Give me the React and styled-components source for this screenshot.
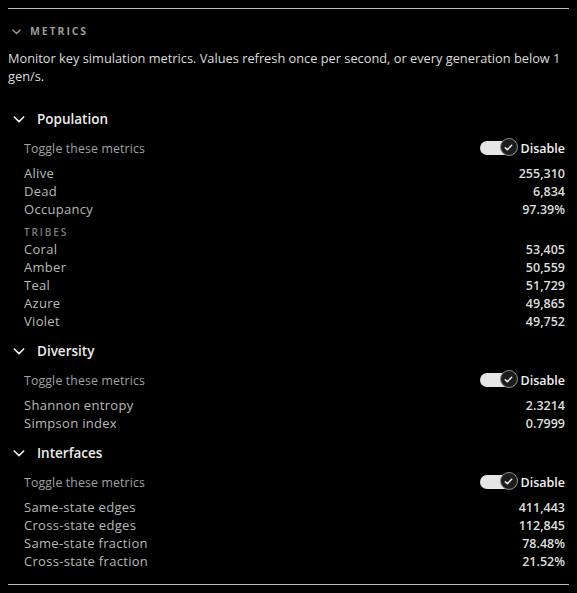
import React from "react";
import styled, { createGlobalStyle } from "styled-components";

const GlobalStyle = createGlobalStyle`
  body {
    margin: 8px;
    background: #000;
    font-family: "Open Sans", "Noto Sans", sans-serif;
  }
`;

const sections = [
  {
    title: "Population",
    rows: [
      { label: "Alive", value: "255,310" },
      { label: "Dead", value: "6,834" },
      { label: "Occupancy", value: "97.39%" },
    ],
    groups: [
      {
        title: "Tribes",
        rows: [
          { label: "Coral", value: "53,405" },
          { label: "Amber", value: "50,559" },
          { label: "Teal", value: "51,729" },
          { label: "Azure", value: "49,865" },
          { label: "Violet", value: "49,752" },
        ],
      },
    ],
  },
  {
    title: "Diversity",
    rows: [
      { label: "Shannon entropy", value: "2.3214" },
      { label: "Simpson index", value: "0.7999" },
    ],
  },
  {
    title: "Interfaces",
    rows: [
      { label: "Same-state edges", value: "411,443" },
      { label: "Cross-state edges", value: "112,845" },
      { label: "Same-state fraction", value: "78.48%" },
      { label: "Cross-state fraction", value: "21.52%" },
    ],
  },
];

const Chevron = ({ size = 12, weight = 2.6 }) => (
  <svg width={size} height={size} viewBox="0 0 24 24" fill="none">
    <path
      d="M4 8.5l8 8 8-8"
      stroke="currentColor"
      strokeWidth={weight}
      strokeLinecap="round"
      strokeLinejoin="round"
    />
  </svg>
);

const MetricRow = ({ label, value }) => (
  <StyledRow>
    <StyledLabel>{label}</StyledLabel>
    <StyledValue>{value}</StyledValue>
  </StyledRow>
);

const MetricSection = ({ title, rows, groups = [] }) => (
  <StyledSection>
    <StyledSectionHead>
      <Chevron size={14} weight={2.8} />
      {title}
    </StyledSectionHead>
    <StyledToggleRow>
      <StyledToggleLabel>Toggle these metrics</StyledToggleLabel>
      <StyledToggle>
        <StyledTrack>
          <StyledKnob>
            <svg width="11" height="11" viewBox="0 0 24 24" fill="none">
              <path
                d="M5 12.5l4.5 4.5L19 7"
                stroke="#fff"
                strokeWidth="3"
                strokeLinecap="round"
                strokeLinejoin="round"
              />
            </svg>
          </StyledKnob>
        </StyledTrack>
        Disable
      </StyledToggle>
    </StyledToggleRow>
    {rows.map((r) => (
      <MetricRow key={r.label} {...r} />
    ))}
    {groups.map((g) => (
      <div key={g.title}>
        <StyledGroupTitle>{g.title}</StyledGroupTitle>
        {g.rows.map((r) => (
          <MetricRow key={r.label} {...r} />
        ))}
      </div>
    ))}
  </StyledSection>
);

const App = () => (
  <>
    <GlobalStyle />
    <StyledPanel>
      <StyledHeader>
        <Chevron size={11} weight={3} />
        Metrics
      </StyledHeader>
      <StyledIntro>
        Monitor key simulation metrics. Values refresh once per second, or
        every generation below 1 gen/s.
      </StyledIntro>
      {sections.map((s) => (
        <MetricSection key={s.title} {...s} />
      ))}
    </StyledPanel>
  </>
);

const StyledPanel = styled.div`
  border-top: 1px solid #bdbdbd;
  border-bottom: 1px solid #bdbdbd;
  padding-bottom: 14px;
`;

const StyledHeader = styled.div`
  display: flex;
  align-items: center;
  gap: 8px;
  height: 20px;
  margin-top: 12px;
  padding-left: 3px;
  color: #9a9a9a;
  font-size: 10.5px;
  font-weight: 700;
  letter-spacing: 1.9px;
  text-transform: uppercase;
`;

const StyledIntro = styled.p`
  margin: 8px 0 0;
  color: #dcdcdc;
  font-size: 12.8px;
  line-height: 18px;
`;

const StyledSection = styled.section`
  margin-top: 9px;

  &:first-of-type {
    margin-top: 22px;
  }
`;

const StyledSectionHead = styled.div`
  display: flex;
  align-items: center;
  gap: 11px;
  height: 24px;
  padding-left: 4px;
  color: #ececec;
  font-size: 13.5px;
  font-weight: 600;
`;

const StyledToggleRow = styled.div`
  display: flex;
  align-items: center;
  justify-content: space-between;
  height: 24px;
  margin: 5px 0 4px;
  padding: 0 4px 0 16px;
`;

const StyledToggleLabel = styled.span`
  color: #a0a0a0;
  font-size: 12.3px;
  letter-spacing: 0.15px;
`;

const StyledToggle = styled.span`
  display: flex;
  align-items: center;
  gap: 4px;
  color: #f0f0f0;
  font-size: 12.5px;
  font-weight: 600;
`;

const StyledTrack = styled.span`
  position: relative;
  display: block;
  width: 37px;
  height: 14px;
  border-radius: 7px;
  background: #e6e6e6;
`;

const StyledKnob = styled.span`
  position: absolute;
  right: -1px;
  top: -3px;
  width: 18px;
  height: 18px;
  box-sizing: border-box;
  border-radius: 50%;
  border: 1px solid #8a8a8a;
  background: #1c1c1c;
  display: flex;
  align-items: center;
  justify-content: center;
`;

const StyledRow = styled.div`
  display: flex;
  align-items: center;
  justify-content: space-between;
  height: 18px;
  padding: 0 4px 0 16px;
  font-size: 12.5px;
`;

const StyledLabel = styled.span`
  color: #b8b8b8;
  font-size: 13px;
  letter-spacing: 0.3px;
`;

const StyledValue = styled.span`
  color: #dedede;
  font-weight: 600;
`;

const StyledGroupTitle = styled.div`
  display: flex;
  align-items: center;
  height: 14px;
  margin: 7px 0 1px;
  padding-left: 16px;
  color: #7e7e7e;
  font-size: 10px;
  font-weight: 600;
  letter-spacing: 1.9px;
  text-transform: uppercase;
`;

export default App;
